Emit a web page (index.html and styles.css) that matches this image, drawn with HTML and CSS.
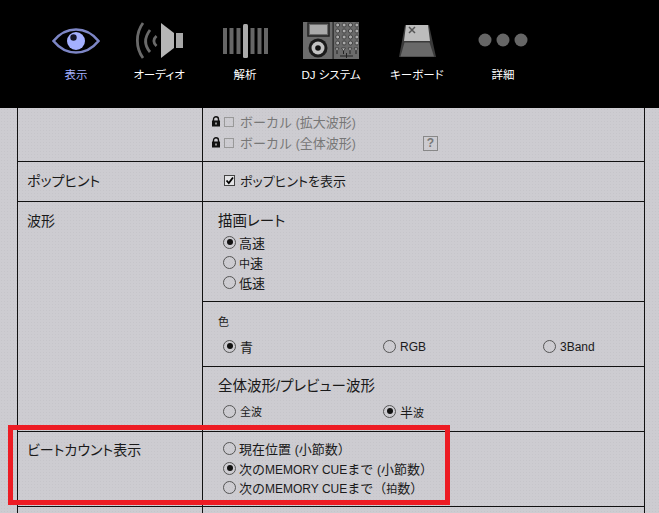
FILE: index.html
```html
<!DOCTYPE html>
<html lang="ja">
<head>
    <meta charset="UTF-8">
    <title>環境設定</title>
    <link rel="stylesheet" href="styles.css">
</head>
<body>
<div class="header">
    <div class="tab active">
        <svg class="icon" width="50" height="40" viewBox="51 21 50 40">
            <path d="M53.5 41C60 33 68 29.5 76 29.5S92 33 98.5 41C92 49 84 52.5 76 52.5S60 49 53.5 41Z" fill="none" stroke="#7d86c6" stroke-width="2.6"/>
            <circle cx="76" cy="41" r="9" fill="#a4b0ff"/>
            <circle cx="73.5" cy="37.5" r="3.2" fill="#14162a"/>
        </svg>
        <span>表示</span>
    </div>
    <div class="tab">
        <svg class="icon" width="50" height="40" viewBox="134 21 50 40">
            <path d="M143 23C135.500 33 135.500 48 143 58M150 30C144 38 144 45 150 52M156.500 36C153 39 153 43 156.500 46" fill="none" stroke="#6a6a6a" stroke-width="2.8"/>
            <path d="M161 23L174 33V48L161 58Z" fill="#b6b6b6"/>
            <rect x="176" y="33" width="7" height="15" fill="#a8a8a8"/>
        </svg>
        <span>オーディオ</span>
    </div>
    <div class="tab">
        <svg class="icon" width="50" height="40" viewBox="220 21 50 40">
            <g fill="#666">
                <rect x="223" y="28" width="4" height="26"/>
                <rect x="229.500" y="28" width="4" height="26"/>
                <rect x="236.500" y="28" width="4" height="26"/>
                <rect x="250.500" y="28" width="4" height="26"/>
                <rect x="257.500" y="28" width="4" height="26"/>
                <rect x="264" y="28" width="4" height="26"/>
            </g>
            <rect x="243" y="24" width="5" height="34" rx="1.500" fill="#ababab"/>
        </svg>
        <span>解析</span>
    </div>
    <div class="tab">
        <svg class="icon" width="60" height="40" viewBox="301 21 60 40">
            <defs>
                <pattern id="pads" x="334.500" y="22" width="6.400" height="6" patternUnits="userSpaceOnUse">
                    <circle cx="3.200" cy="3" r="2" fill="#aaa" stroke="#222" stroke-width=".7"/>
                </pattern>
            </defs>
            <rect x="303" y="22" width="56" height="37" fill="#6b6b6b"/>
            <rect x="308" y="23" width="21" height="13" fill="none" stroke="#222" stroke-width="1.500"/>
            <rect x="310" y="25" width="17" height="9" fill="#aaa"/>
            <circle cx="318" cy="48" r="9.500" fill="#1a1a1a"/>
            <circle cx="318" cy="48" r="6.500" fill="#c2c2c2"/>
            <circle cx="318" cy="48" r="2.800" fill="#111"/>
            <rect x="332.500" y="22" width="1.200" height="37" fill="#222"/>
            <rect x="334.500" y="22" width="24.500" height="24" fill="url(#pads)"/>
            <path d="M335 48H339L337 51ZM341.500 48H345.500L343.500 51ZM348 48H352L350 51ZM354 48H358L356 51Z" fill="#bbb" stroke="#222" stroke-width=".6"/>
            <path d="M337 51V54M343.500 51V54M350 51V54M356 51V54M340 56H353M346.500 53V58" stroke="#222"/>
        </svg>
        <span>DJ システム</span>
    </div>
    <div class="tab">
        <svg class="icon" width="44" height="40" viewBox="395 21 44 40">
            <path d="M405 25H429L436 57H399Z" fill="#3a3a3a"/>
            <path d="M406 25H428L430 41H404Z" fill="#bcbcbc"/>
            <path d="M404.500 42.500H429.500L434 56.500H400.500Z" fill="#696969"/>
            <path d="M409 27L415 33M415 27L409 33" stroke="#555" stroke-width="1.500"/>
        </svg>
        <span>キーボード</span>
    </div>
    <div class="tab">
        <svg class="icon" width="54" height="40" viewBox="476 21 54 40">
            <g fill="#666">
                <circle cx="485" cy="40" r="6.500"/>
                <circle cx="503" cy="40" r="6.500"/>
                <circle cx="521" cy="40" r="6.500"/>
            </g>
        </svg>
        <span>詳細</span>
    </div>
</div>

<div class="settings">
    <div class="row rowVocal">
        <div class="label"></div>
        <div class="cell vocal">
            <div class="lockLine">
                <svg class="lock" width="10" height="11" viewBox="0 0 10 11"><path d="M2.500 5V3.200a2.500 2.500 0 0 1 5 0V5" fill="none" stroke="#111" stroke-width="1.400"/><rect x="1" y="4.500" width="8" height="6" fill="#111"/><rect x="4.300" y="6.500" width="1.400" height="2" fill="#ccc"/></svg>
                <i class="check off"></i>
                <span class="vocalText">ボーカル <em>(</em>拡大波形<em>)</em></span>
            </div>
            <div class="lockLine">
                <svg class="lock" width="10" height="11" viewBox="0 0 10 11"><path d="M2.500 5V3.200a2.500 2.500 0 0 1 5 0V5" fill="none" stroke="#111" stroke-width="1.400"/><rect x="1" y="4.500" width="8" height="6" fill="#111"/><rect x="4.300" y="6.500" width="1.400" height="2" fill="#ccc"/></svg>
                <i class="check off"></i>
                <span class="vocalText">ボーカル <em>(</em>全体波形<em>)</em></span>
                <b class="help">?</b>
            </div>
        </div>
    </div>
    <div class="row rowHint">
        <div class="label">ポップヒント</div>
        <div class="cell hint">
            <svg class="tick" width="11" height="11" viewBox="0 0 11 11"><rect x=".5" y=".5" width="10" height="10" fill="#e4e4e6" stroke="#444"/><path d="M2.500 5.500L4.800 8L9 2.500" fill="none" stroke="#000" stroke-width="1.800"/></svg>
            <span>ポップヒントを表示</span>
        </div>
    </div>
    <div class="row">
        <div class="label">波形</div>
        <div class="stack">
            <div class="cell rate">
                <div class="heading">描画レート</div>
                <div class="radioLine"><i class="radio on"></i><span>高速</span></div>
                <div class="radioLine"><i class="radio"></i><span><small>中</small>速</span></div>
                <div class="radioLine"><i class="radio"></i><span>低速</span></div>
            </div>
            <div class="cell color">
                <div class="headingSmall">色</div>
                <div class="choices">
                    <div class="radioLine"><i class="radio on"></i><span>青</span></div>
                    <div class="radioLine"><i class="radio"></i><span><em>RGB</em></span></div>
                    <div class="radioLine"><i class="radio"></i><span><em>3Band</em></span></div>
                </div>
            </div>
            <div class="cell overview">
                <div class="heading">全体波形/プレビュー波形</div>
                <div class="choices">
                    <div class="radioLine"><i class="radio"></i><span><small>全波</small></span></div>
                    <div class="radioLine"><i class="radio on"></i><span>半<small>波</small></span></div>
                </div>
            </div>
        </div>
    </div>
    <div class="row rowBeat">
        <div class="label">ビートカウント表示</div>
        <div class="cell beat">
            <div class="radioLine"><i class="radio"></i><span>現在位置 <em>(</em>小節数）</span></div>
            <div class="radioLine"><i class="radio on"></i><span>次の<em>MEMORY CUE</em>まで <em>(</em>小節数）</span></div>
            <div class="radioLine"><i class="radio"></i><span>次の<em>MEMORY CUE</em>まで（<small>拍</small>数）</span></div>
        </div>
    </div>
    <div class="row rowLast">
        <div class="label"></div>
        <div class="cell"></div>
    </div>
</div>

<div class="highlight"></div>
</body>
</html>
```

FILE: styles.css
```css
* {
    margin: 0;
    padding: 0;
    box-sizing: border-box;
}

html, body {
    height: 513px;
    overflow: hidden;
}

body {
    position: relative;
    background-color: #cdccd1;
    background-image: radial-gradient(#c6c5ca .7px, transparent .8px);
    background-size: 3px 3px;
    color: #1a1a1a;
    font-family: "Liberation Sans", "Noto Sans CJK JP", sans-serif;
    font-size: 13px;
    font-feature-settings: "palt";
}

small {font-size: 11px;}

em {font-size: 12px;font-style: normal;}

i {font-style: normal;}

.header {display: flex;height: 108px;padding: 21px 0 0 33px;background: #000;}

.tab {display: flex;flex-direction: column;align-items: center;width: 86px;color: #fff;font-size: 11.5px;line-height: 16px;}

.tab.active {margin-right: -3px;color: #a4b0ff;}

.tab .icon {display: block;margin-bottom: 6px;}

.settings {width: 628px;height: 405px;margin-left: 17px;border-left: 1px solid #111;border-right: 1px solid #111;}

.row {display: flex;border-bottom: 1px solid #111;}

.rowVocal {height: 54px;}

.rowHint {height: 40px;}

.rowBeat {height: 75px;}

.rowLast {height: 6px;border-bottom: 0;}

.label {flex: none;width: 185px;padding: 11px 0 0 9px;border-right: 1px solid #111;font-size: 14px;line-height: 17px;}

.rowBeat .label {padding-top: 10px;}

.cell {flex: 1;}

.stack {flex: 1;}

.stack .cell + .cell {border-top: 1px solid #111;}

.vocal {padding: 3px 0 0 8px;color: #777;font-feature-settings: normal;}

.lockLine {display: flex;align-items: center;height: 21px;}

.lock {margin-right: 3px;}

.check {width: 10px;height: 10px;margin-right: 6px;border: 1px solid #999;}

.vocalText {width: 183px;}

.help {width: 15px;height: 15px;margin-top: 2px;border: 1px solid #888;color: #777;font-size: 12px;line-height: 13px;text-align: center;}

.hint {display: flex;align-items: center;padding: 0 0 2px 21px;}

.tick {margin-right: 5px;}

.rate {height: 99px;padding: 11px 0 0 15px;}

.color {height: 65px;padding: 12px 0 0 15px;}

.overview {height: 65px;padding: 11px 0 0 15px;}

.heading {height: 19px;font-size: 14.5px;line-height: 17px;}

.headingSmall {height: 20px;font-size: 11px;line-height: 17px;}

.rate .radioLine, .beat .radioLine {margin-left: 5px;}

.choices {display: grid;grid-template-columns: 160px 160px 1fr;margin: 2px 0 0 5px;}

.choices .radio {margin-right: 4px;}

.overview .choices {margin-top: 4px;}

.radioLine {display: flex;align-items: center;height: 20px;}

.radio {position: relative;flex: none;width: 13px;height: 13px;margin-right: 3px;border: 1px solid #555;border-radius: 50%;}

.radio.on:after {content: " ";position: absolute;top: 2.5px;left: 2.5px;width: 6px;height: 6px;border-radius: 50%;background: #111;}

.beat {padding: 7px 0 0 15px;font-feature-settings: normal;}

.beat .radioLine {height: 19.5px;}

.highlight {position: absolute;top: 425px;left: 8px;width: 442px;height: 80px;border: 5px solid #ed1c24;}
```
